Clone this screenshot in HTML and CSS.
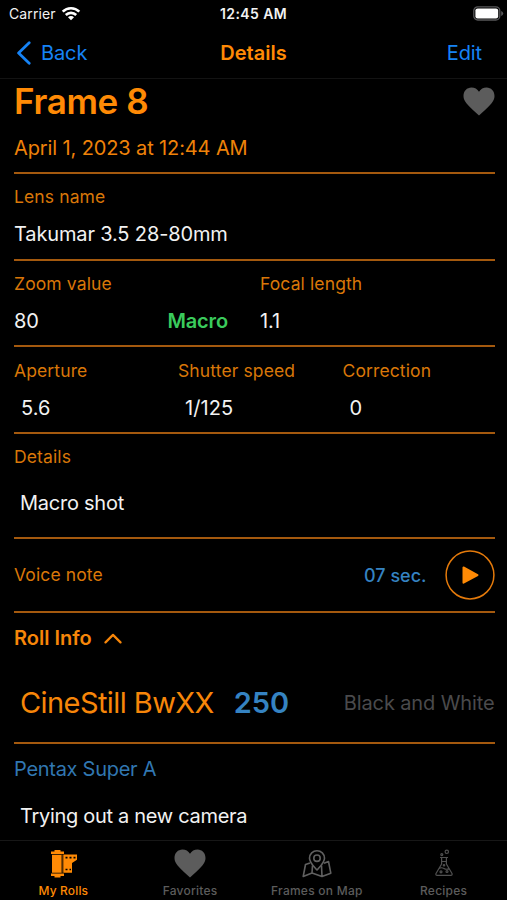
FILE: index.html
```html
<!DOCTYPE html>
<html lang="en">
<head>
<meta charset="utf-8">
<title>Details</title>
<link rel="stylesheet" href="styles.css">
</head>
<body>
<div class="app">
  <header class="status">
    <div class="carrier"><span>Carrier</span>
      <svg width="20" height="15" viewBox="0 0 20 15" fill="none" stroke="#fff" stroke-width="2.6"><path d="M1.7 5.600a11.800 11.800 0 0 1 16.600 0M4.800 9a7.400 7.400 0 0 1 10.400 0"/><path d="M10 14.200 7 11.200a4.200 4.200 0 0 1 6 0z" fill="#fff" stroke="none"/></svg>
    </div>
    <span class="clock">12:45 AM</span>
    <svg class="battery" width="31" height="15" viewBox="0 0 31 15"><rect x=".8" y=".8" width="26" height="13.200" rx="4" fill="none" stroke="#58585a" stroke-width="1.300"/><rect x="2.400" y="2.400" width="22.800" height="10" rx="2.200" fill="#fff"/><path d="M28.200 5v5q2-.7 2-2.500T28.200 5z" fill="#58585a"/></svg>
  </header>
  <nav class="navbar">
    <a class="back"><svg width="16" height="24" viewBox="0 0 16 24" fill="none" stroke="#1683f5" stroke-width="2.800" stroke-linecap="round" stroke-linejoin="round"><path d="M13.200 1.800 2.600 12l10.600 10.200"/></svg><span>Back</span></a>
    <span class="navtitle">Details</span>
    <a class="edit">Edit</a>
  </nav>
  <main class="content">
    <section class="row head">
      <div class="title"><h1>Frame 8</h1>
        <svg width="32" height="29" viewBox="0 0 32 29"><path d="M16 28.500C12.400 24.800 6.800 20.400 3.600 16.400 1.500 13.800.5 11.600.5 9 .5 4 4 .5 8.400.5c3.300 0 5.900 1.500 7.600 4.200C17.700 2 20.300.5 23.600.5 28 .5 31.500 4 31.500 9c0 2.600-1 4.800-3.100 7.400C25.200 20.400 19.600 24.800 16 28.500z" fill="#5c5c5c"/></svg>
      </div>
      <div class="date">April 1, 2023 at 12:44 AM</div>
    </section>
    <section class="row field">
      <div class="label">Lens name</div>
      <div class="value">Takumar 3.5 28-80mm</div>
    </section>
    <section class="row pair">
      <div class="field">
        <div class="label">Zoom value</div>
        <div class="value split"><span>80</span><span class="macro">Macro</span></div>
      </div>
      <div class="field">
        <div class="label">Focal length</div>
        <div class="value">1.1</div>
      </div>
    </section>
    <section class="row triple">
      <div class="field"><div class="label">Aperture</div><div class="value inset">5.6</div></div>
      <div class="field"><div class="label">Shutter speed</div><div class="value inset">1/125</div></div>
      <div class="field"><div class="label">Correction</div><div class="value inset">0</div></div>
    </section>
    <section class="row field notes">
      <div class="label">Details</div>
      <div class="value">Macro shot</div>
    </section>
    <section class="row voice">
      <span class="label">Voice note</span>
      <span class="sec">07 sec.</span>
      <svg width="50" height="50" viewBox="0 0 50 50"><circle cx="25" cy="25" r="23.900" fill="none" stroke="#e47a0b" stroke-width="1.500"/><path d="M18.500 17.500v15.200l14-7.600z" fill="#ff8a05" stroke="#ff8a05" stroke-width="2" stroke-linejoin="round"/></svg>
    </section>
    <section class="row roll">
      <div class="rollhead"><span>Roll Info</span><svg width="18" height="11" viewBox="0 0 18 11" fill="none" stroke="#f78609" stroke-width="2.200" stroke-linecap="round" stroke-linejoin="round"><path d="m1.500 9.400 7.500-7.500 7.500 7.500"/></svg></div>
      <div class="film"><span class="stock">CineStill BwXX</span><span class="iso">250</span><span class="kind">Black and White</span></div>
    </section>
    <section class="camera">
      <div class="body-name">Pentax Super A</div>
      <div class="value remark">Trying out a new camera</div>
    </section>
  </main>
  <footer class="tabs">
    <div class="tab active"><svg width="30" height="30" viewBox="0 0 30 30"><path d="M3 2.500h3.500V1h6v1.500H16V5H3zM4 5.800h9.500v18H4zM3 24.500h13V27h-3.500v1.500h-6V27H3zM15.300 5.500H29v5.200l-5 3.300v9.700h-8.700z" fill="#ff8a05"/><path d="M17.500 8.600h2m2 0h2m2 0h2M17.500 20.500h2m2 0h1.500" stroke="#000" stroke-width="1.600"/><path d="M13.500 5.500h1v18.300h-1z" fill="#a55a05"/></svg><span>My Rolls</span></div>
    <div class="tab"><svg width="32" height="29" viewBox="0 0 32 29"><path d="M16 28.500C12.400 24.800 6.800 20.400 3.600 16.400 1.500 13.800.5 11.600.5 9 .5 4 4 .5 8.400.5c3.300 0 5.900 1.500 7.600 4.200C17.700 2 20.300.5 23.600.5 28 .5 31.500 4 31.500 9c0 2.600-1 4.800-3.100 7.400C25.200 20.400 19.600 24.800 16 28.500z" fill="#5c5c5c"/></svg><span>Favorites</span></div>
    <div class="tab"><svg width="30" height="30" viewBox="0 0 30 30" fill="none" stroke="#606060" stroke-width="1.600" stroke-linejoin="round"><path d="M15 21C11.500 17 7.500 13.500 7.500 9.200a7.500 7.500 0 0 1 15 0C22.500 13.500 18.500 17 15 21z"/><circle cx="15" cy="9.200" r="3.200"/><path d="M8 14l-4.500 1.500-2.300 12L10 24l10 3.500 8.800-3.300L26.500 12.500 22 14.200M10.500 16.500 10 24M19.500 16.500l.5 11"/></svg><span>Frames on Map</span></div>
    <div class="tab"><svg width="20" height="30" viewBox="0 0 20 30" fill="none" stroke="#505050" stroke-width="1.200" stroke-linejoin="round"><path d="M6 8.500h8M7.600 9v6L2 24.500q-.6 1.800 1.200 1.800h13.600q1.800 0 1.200-1.800L12.400 15V9M7.600 12.500h4.800M5 19.500q2.500-1.500 5 0t5 0"/><circle cx="12.800" cy="2.800" r="1.700"/><circle cx="7.800" cy="5.600" r="1"/><circle cx="7" cy="22.800" r="1"/><circle cx="13" cy="22.500" r="1"/><circle cx="10" cy="16.300" r=".7"/></svg><span>Recipes</span></div>
  </footer>
</div>
</body>
</html>
```
FILE: styles.css
```css
* { box-sizing: border-box; }
body { margin: 0; background: #000; color: #f2f2f2; font-family: Inter, "Liberation Sans", sans-serif; white-space: nowrap; }
svg { display: block; flex: none; }
.app { width: 507px; height: 900px; display: flex; flex-direction: column; overflow: hidden; }
.status { height: 27px; flex: none; display: grid; grid-template-columns: 1fr auto 1fr; align-items: center; padding: 0 4px; font-size: 14px; }
.carrier { display: flex; align-items: center; gap: 5px; padding-left: 5px; letter-spacing: 0.1px; }
.clock { font-weight: 600; font-size: 14px; letter-spacing: 0.4px; }
.battery { justify-self: end; margin-right: -1px; margin-top: -1px; }
.navbar { height: 52px; flex: none; display: grid; grid-template-columns: 1fr auto 1fr; align-items: center; padding: 0 16px; font-size: 20px; color: #1683f5; border-bottom: 1px solid #131313; }
.back { display: flex; align-items: center; gap: 9px; letter-spacing: -0.1px; }
.navtitle { color: #ff8a05; font-weight: 600; }
.edit { justify-self: end; margin-right: 9px; letter-spacing: -0.1px; }
.content { flex: 1; padding: 0 12.500px 0 14px; min-height: 0; }
.row { border-bottom: 2px solid #a4590e; }
.head { height: 95px; color: #ff8a05; }
.title { display: flex; justify-content: space-between; align-items: center; height: 45px; }
h1 { margin: 0; font-size: 35px; font-weight: 600; letter-spacing: -0.35px; line-height: 43px; }
.date { font-size: 20px; line-height: 48px; letter-spacing: -0.12px; color: #ef8209; }
.row.field { height: 87px; }
.pair { height: 86px; }
.triple { height: 87px; }
.label { font-size: 17.500px; line-height: 22px; letter-spacing: 0.12px; color: #d97708; }
.field { padding-top: 12px; }
.value { font-size: 20px; line-height: 26px; margin-top: 13px; letter-spacing: -0.14px; }
.pair { display: grid; grid-template-columns: 246px 1fr; }
.split { display: flex; justify-content: space-between; padding-right: 32px; }
.macro { color: #3acb5c; font-weight: 600; }
.triple { display: grid; grid-template-columns: 164px 164.500px 1fr; }
.inset { padding-left: 7px; letter-spacing: 0.1px; }
.triple .field { padding-top: 13px; }
.row.notes { height: 105px; }
.notes .value { padding-left: 6px; margin-top: 22px; letter-spacing: -0.25px; }
.voice { height: 74px; display: flex; align-items: center; }
.sec { margin-left: auto; margin-right: 18px; font-size: 18px; font-weight: 500; color: #3583c2; }
.roll { height: 131px; }
.rollhead { height: 50px; display: flex; align-items: center; gap: 12px; color: #f78609; font-size: 20px; font-weight: 600; }
.film { height: 79px; display: flex; align-items: center; padding-left: 6px; }
.stock { font-size: 29px; letter-spacing: -0.58px; color: #f78609; }
.iso { font-size: 29px; font-weight: 600; color: #3583c2; margin-left: 20px; }
.kind { margin-left: auto; font-size: 20px; letter-spacing: -0.12px; color: #4a4a4c; }
.body-name { font-size: 20px; line-height: 26px; margin-top: 12px; letter-spacing: -0.28px; color: #3177b1; }
.remark { margin-top: 21px; padding-left: 6px; letter-spacing: -0.3px; }
.tabs { height: 60px; flex: none; display: grid; grid-template-columns: repeat(4, 1fr); border-top: 1px solid #171717; }
.tab { display: flex; flex-direction: column; align-items: center; font-size: 12px; font-weight: 500; letter-spacing: 0.25px; color: #5c5c5c; justify-content: space-between; padding: 8px 0 2px; }
.active { color: #ff8a05; letter-spacing: 0.15px; }
```
